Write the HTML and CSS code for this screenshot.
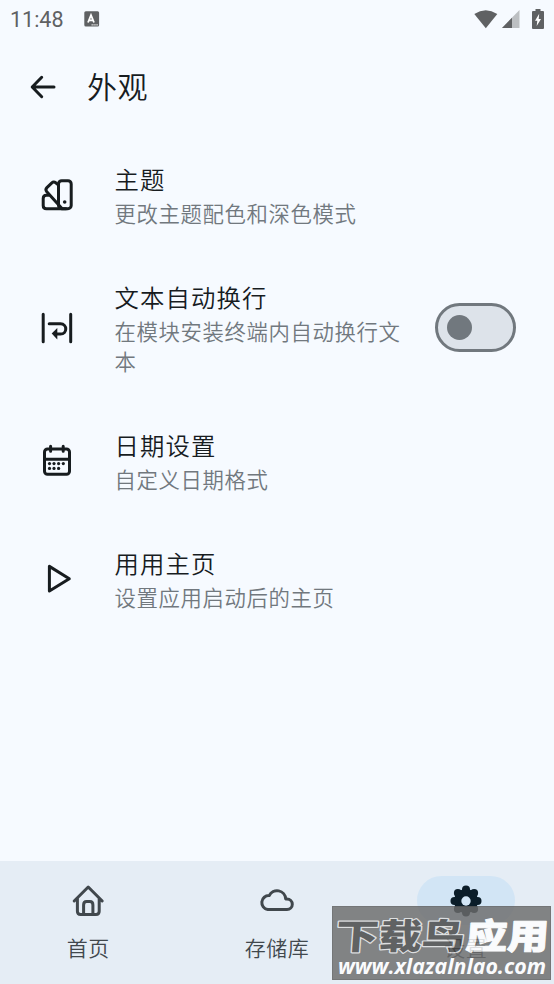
FILE: index.html
```html
<!DOCTYPE html>
<html lang="zh-CN">
<head>
    <meta charset="UTF-8">
    <meta name="viewport" content="width=device-width, initial-scale=1.0">
    <title>外观</title>
    <link rel="stylesheet" href="styles.css">
</head>
<body>
    <div class="screen">
        <div class="status-bar">
            <span class="clock">11:48</span>
            <svg class="ime-icon" width="16" height="16" viewBox="0 0 16 16">
                <rect x="0.3" y="0.3" width="14.8" height="15.2" rx="1.5" fill="#5f6163"/>
                <path d="M4 11.5 L7 4.2 L10 11.5 M5.2 9.3 H8.8" fill="none" stroke="#fff" stroke-width="1.8"/>
                <path d="M7.5 13.9 H14" stroke="#fff" stroke-width="1" stroke-dasharray="1.4 0.5"/>
            </svg>
            <div class="status-icons">
                <svg width="24" height="19" viewBox="0 0 24 19">
                    <path d="M0.3 4 Q11.7 -3.4 23.3 4 L11.8 18.3 Z" fill="#5f6163"/>
                </svg>
                <svg width="18" height="18" viewBox="0 0 18 18">
                    <path d="M0 18 L17.5 0 V18 Z" fill="#bcbfc2"/>
                    <path d="M0 18 L10 7.7 V18 Z" fill="#5f6163"/>
                </svg>
                <svg width="12" height="20" viewBox="0 0 12 20">
                    <path d="M3.5 0 H8.5 V2 H11 Q12 2 12 3 V19 Q12 20 11 20 H1 Q0 20 0 19 V3 Q0 2 1 2 H3.5 Z" fill="#5f6163"/>
                    <path d="M7.2 4.8 L3 11.8 H5.3 L4.7 17 L9 10 H6.7 Z" fill="#fff"/>
                </svg>
            </div>
        </div>

        <header class="app-bar">
            <svg class="back" width="26" height="24" viewBox="0 0 26 24">
                <path d="M24 12 H2.5 M11.7 2.3 L2.2 12 L11.7 21.7"/>
            </svg>
            <h1>外观</h1>
        </header>

        <main class="settings">
            <div class="item">
                <svg class="icon" viewBox="0 0 36 36">
                    <rect x="19.5" y="3.7" width="12.7" height="28" rx="3.2"/>
                    <path d="M19.5 8 L16.8 5.8 Q14.6 4.2 12.6 6.1 L7.9 10.6 Q6 12.6 7.8 14.7 L22.5 31"/>
                    <path d="M9.5 18.3 H7.4 Q4.2 18.3 4.2 21.5 V28.5 Q4.2 31.7 7.4 31.7 H27"/>
                    <circle class="dot" cx="25.7" cy="25" r="1.8"/>
                </svg>
                <div class="text">
                    <div class="title">主题</div>
                    <div class="summary">更改主题配色和深色模式</div>
                </div>
            </div>

            <div class="item">
                <svg class="icon" viewBox="0 0 36 36">
                    <path d="M4.2 4.2 V31.8 M31.7 4.2 V31.8 M10.2 13.8 H21.5 C28.5 13.8 28.5 24 21.5 24 H17.5"/>
                    <path class="dot" d="M12.7 23.5 L18.3 18 V29.5 Z"/>
                </svg>
                <div class="text">
                    <div class="title">文本自动换行</div>
                    <div class="summary">在模块安装终端内自动换行文本</div>
                </div>
                <div class="switch"><span class="thumb"></span></div>
            </div>

            <div class="item">
                <svg class="icon" viewBox="0 0 36 36">
                    <rect x="5.5" y="6" width="25" height="25.3" rx="3"/>
                    <path d="M5.5 16.3 H30.5 M11.6 3.3 V8.2 M24.2 3.3 V8.2"/>
                    <g class="dot">
                        <circle cx="10.5" cy="20.6" r="1.6"/>
                        <circle cx="15" cy="20.6" r="1.6"/>
                        <circle cx="19.6" cy="20.6" r="1.6"/>
                        <circle cx="24.3" cy="20.6" r="1.6"/>
                        <circle cx="10.5" cy="25.4" r="1.6"/>
                        <circle cx="15" cy="25.4" r="1.6"/>
                        <circle cx="19.6" cy="25.4" r="1.6"/>
                    </g>
                </svg>
                <div class="text">
                    <div class="title">日期设置</div>
                    <div class="summary">自定义日期格式</div>
                </div>
            </div>

            <div class="item">
                <svg class="icon" viewBox="0 0 36 36">
                    <path d="M10.4 5.4 V30 L30.3 17.7 Z"/>
                </svg>
                <div class="text">
                    <div class="title">用用主页</div>
                    <div class="summary">设置应用启动后的主页</div>
                </div>
            </div>
        </main>

        <nav class="bottom-nav">
            <a class="nav-item">
                <span class="pill">
                    <svg class="icon" viewBox="0 0 36 36">
                        <path d="M4.2 18 L18.2 4 L32.2 18 M7.4 15.5 V28.3 Q7.4 31.5 10.6 31.5 H26 Q29.2 31.5 29.2 28.3 V15.5"/>
                        <path d="M13.6 31.5 V22 Q13.6 18.6 16.6 18.6 H19.9 Q22.9 18.6 22.9 22 V31.5"/>
                    </svg>
                </span>
                <span class="label">首页</span>
            </a>
            <a class="nav-item">
                <span class="pill">
                    <svg class="icon" viewBox="0 0 36 36">
                        <path d="M8.7 26.5 H28 A5.3 5.3 0 0 0 28 15.9 H26.7 A8.7 8.7 0 0 0 10.2 12.6 A7 7 0 0 0 8.7 26.5 Z"/>
                    </svg>
                </span>
                <span class="label">存储库</span>
            </a>
            <a class="nav-item active">
                <span class="pill">
                    <svg class="icon" viewBox="0 0 36 36">
                        <g class="petals">
                            <circle cx="18" cy="18" r="12"/>
                            <circle cx="18" cy="6.5" r="4"/>
                            <circle cx="26.1" cy="9.9" r="4"/>
                            <circle cx="29.5" cy="18" r="4"/>
                            <circle cx="26.1" cy="26.1" r="4"/>
                            <circle cx="18" cy="29.5" r="4"/>
                            <circle cx="9.9" cy="26.1" r="4"/>
                            <circle cx="6.5" cy="18" r="4"/>
                            <circle cx="9.9" cy="9.9" r="4"/>
                        </g>
                        <circle class="hole" cx="18" cy="18" r="4.7"/>
                    </svg>
                </span>
                <span class="label">设置</span>
            </a>
        </nav>

        <!-- site stamp over the corner -->
        <div class="stamp">
            <svg width="219" height="74" viewBox="0 0 219 74">
                <g class="stamp-name" transform="translate(6 43) skewX(-4)">
                    <text class="name-dark" x="-3" y="0" textLength="129" lengthAdjust="spacingAndGlyphs">下载鸟</text>
                    <text class="name-light" x="127" y="0" textLength="83" lengthAdjust="spacingAndGlyphs">应用</text>
                </g>
                <text class="stamp-url" x="6" y="68" textLength="208" lengthAdjust="spacingAndGlyphs">www.xlazalnlao.com</text>
            </svg>
        </div>
    </div>
</body>
</html>
```
FILE: styles.css
```css
body {
    margin: 0;
    font-family: Roboto, 'Noto Sans CJK SC', sans-serif;
    background-color: #f6faff;
    color: #171c1f;
}

.screen {
    position: relative;
    display: flex;
    flex-direction: column;
    height: 984px;
    overflow: hidden;
}

/* Status bar */
.status-bar {
    display: flex;
    align-items: center;
    height: 38px;
    padding: 0 10px;
    color: #5f6163;
}

.clock {
    width: 74px;
    font-size: 21.5px;
}

.status-icons {
    display: flex;
    align-items: center;
    margin-left: auto;
}

.status-icons svg:nth-child(2) {
    margin: 0 12px 0 4px;
}

/* App bar */
.app-bar {
    display: flex;
    align-items: center;
    height: 97px;
    padding-left: 30px;
}

.back {
    fill: none;
    stroke: #171c1f;
    stroke-width: 3;
    stroke-linecap: round;
    stroke-linejoin: round;
}

h1 {
    margin: 0 0 0 31px;
    padding-top: 3px;
    font-size: 30px;
    font-weight: 350;
    line-height: 40px;
    letter-spacing: 0.4px;
}

/* Settings list */
.settings {
    flex: 1;
}

.item {
    display: flex;
    align-items: center;
    padding: 24px 38px 23px 39px;
}

.icon {
    flex: none;
    width: 36px;
    height: 36px;
    fill: none;
    stroke: #171c1f;
    stroke-width: 3;
    stroke-linecap: round;
    stroke-linejoin: round;
}

.icon .dot {
    fill: #171c1f;
    stroke: none;
}

.text {
    flex: 1;
    margin-left: 39.5px;
    padding-top: 4px;
}

.title {
    font-size: 24.4px;
    font-weight: 350;
    line-height: 36px;
    letter-spacing: 1.1px;
}

.summary {
    margin-top: 0.6px;
    font-size: 21.4px;
    font-weight: 350;
    line-height: 30.4px;
    letter-spacing: 0.6px;
    color: #71787e;
}

.switch {
    display: flex;
    align-items: center;
    box-sizing: border-box;
    width: 81px;
    height: 49px;
    margin-left: 30px;
    padding-left: 9px;
    border: 3px solid #71787e;
    border-radius: 25px;
    background-color: #dde3ea;
}

.thumb {
    width: 25px;
    height: 25px;
    border-radius: 50%;
    background-color: #71787e;
}

/* Bottom navigation */
.bottom-nav {
    display: flex;
    gap: 12px;
    height: 123px;
    background-color: #e5edf5;
}

.nav-item {
    flex: 1;
    display: flex;
    flex-direction: column;
    align-items: center;
    padding-top: 15px;
    color: #41484d;
}

.pill {
    display: flex;
    align-items: center;
    justify-content: center;
    width: 98px;
    height: 49px;
    border-radius: 25px;
}

.nav-item .icon {
    stroke: #41484d;
}

.active .pill {
    background-color: #d2e5f5;
}

.active .icon .petals {
    fill: #0b1d29;
    stroke: none;
}

.active .icon .hole {
    fill: #d2e5f5;
    stroke: none;
}

.label {
    margin-top: 9px;
    font-size: 21px;
    font-weight: 350;
    line-height: 30px;
    letter-spacing: 0.5px;
}

/* Stamp */
.stamp {
    position: absolute;
    left: 332px;
    top: 906px;
    width: 219px;
    height: 74px;
    background-color: #6c6c6c;
    box-shadow: inset 0 0 0 1px #5c5c5c;
    opacity: 0.82;
}

.stamp-name {
    font-family: 'Noto Sans CJK SC', sans-serif;
    font-size: 35px;
    font-weight: 900;
    paint-order: stroke;
    stroke-linejoin: round;
}

.name-dark {
    fill: #444;
    stroke: #dcdcdc;
    stroke-width: 2.4;
}

.name-light {
    fill: #fff;
    stroke: #fff;
    stroke-width: 1;
}

.stamp-url {
    font-family: 'Open Sans', sans-serif;
    font-size: 21px;
    font-weight: 700;
    font-style: italic;
    fill: #fff;
}
```
